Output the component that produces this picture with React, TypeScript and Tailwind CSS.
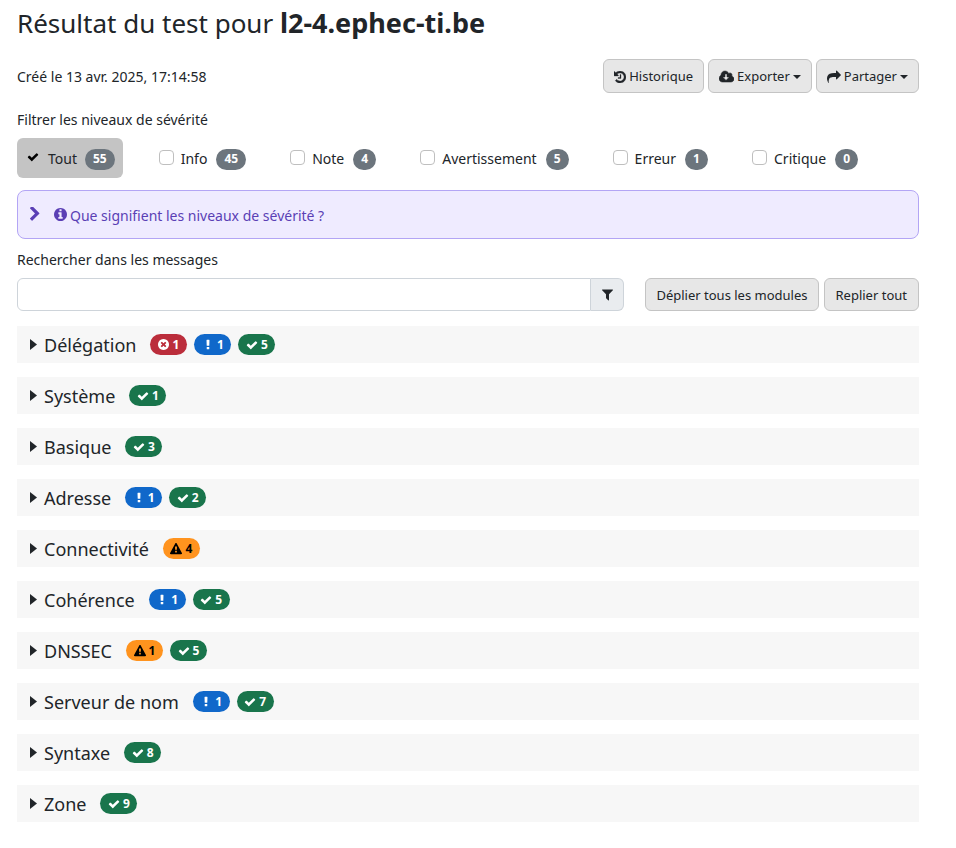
import { useState, type ReactNode } from "react";

const ICONS = {
  check: {
    box: "0 0 1792 1792",
    d: "M1671 566q0 40-28 68l-724 724-136 136q-28 28-68 28t-68-28l-136-136-362-362q-28-28-28-68t28-68l136-136q28-28 68-28t68 28l294 295 656-657q28-28 68-28t68 28l136 136q28 28 28 68z",
  },
  chevron: {
    box: "256 128 1280 1536",
    d: "M1363 877l-742 742q-19 19-45 19t-45-19l-166-166q-19-19-19-45t19-45l531-531-531-531q-19-19-19-45t19-45l166-166q19-19 45-19t45 19l742 742q19 19 19 45t-19 45z",
  },
  info: {
    box: "128 128 1536 1536",
    d: "M1152 1376v-160q0-14-9-23t-23-9h-96v-512q0-14-9-23t-23-9h-320q-14 0-23 9t-9 23v160q0 14 9 23t23 9h96v320h-96q-14 0-23 9t-9 23v160q0 14 9 23t23 9h448q14 0 23-9t9-23zm-128-896v-160q0-14-9-23t-23-9h-192q-14 0-23 9t-9 23v160q0 14 9 23t23 9h192q14 0 23-9t9-23zm640 416q0 209-103 385.5t-279.5 279.5-385.5 103-385.5-103-279.5-279.5-103-385.5 103-385.5 279.5-279.5 385.5-103 385.5 103 279.5 279.5 103 385.5z",
  },
  cross: {
    box: "128 128 1536 1536",
    d: "M1277 1122q0-26-19-45l-181-181 181-181q19-19 19-45 0-27-19-46l-90-90q-19-19-46-19-26 0-45 19l-181 181-181-181q-19-19-45-19-27 0-46 19l-90 90q-19 19-19 46 0 26 19 45l181 181-181 181q-19 19-19 45 0 27 19 46l90 90q19 19 46 19 26 0 45-19l181-181 181 181q19 19 45 19 27 0 46-19l90-90q19-19 19-46zm387-226q0 209-103 385.5t-279.5 279.5-385.5 103-385.5-103-279.5-279.5-103-385.5 103-385.5 279.5-279.5 385.5-103 385.5 103 279.5 279.5 103 385.5z",
  },
  history: {
    box: "128 128 1536 1536",
    d: "M1664 896q0 156-61 298t-164 245-245 164-298 61q-172 0-327-72.5t-264-204.5q-7-10-6.5-22.5t8.5-20.5l137-138q10-9 25-9 16 2 23 12 73 95 179 147t225 52q104 0 198.5-40.5t163.5-109.5 109.5-163.5 40.5-198.5-40.5-198.5-109.5-163.5-163.5-109.5-198.5-40.5q-98 0-188 35.5t-160 101.5l137 138q31 30 14 69-17 40-59 40h-448q-26 0-45-19t-19-45v-448q0-42 40-59 39-17 69 14l130 129q107-101 244.5-156.5t284.5-55.5q156 0 298 61t245 164 164 245 61 298zm-640-288v448q0 14-9 23t-23 9h-320q-14 0-23-9t-9-23v-64q0-14 9-23t23-9h224v-352q0-14 9-23t23-9h64q14 0 23 9t9 23z",
    stroke: 40,
  },
  download: {
    box: "-64 0 1920 1792",
    d: "M1216 928q0-14-9-23t-23-9h-224v-352q0-13-9.5-22.5t-22.5-9.5h-192q-13 0-22.5 9.5t-9.5 22.5v352h-224q-13 0-22.5 9.5t-9.5 22.5q0 14 9 23l352 352q9 9 23 9t23-9l351-351q10-12 10-24zm640 224q0 159-112.5 271.5t-271.5 112.5h-1088q-185 0-316.5-131.5t-131.5-316.5q0-130 70-240t188-165q-2-30-2-43 0-212 150-362t362-150q156 0 285.5 87t188.5 231q71-62 166-62 106 0 181 75t75 181q0 76-41 138 130 31 213.5 135.5t83.5 238.5z",
    stroke: 70,
  },
  share: {
    box: "0 0 1792 1792",
    d: "M1792 640q0 26-19 45l-512 512q-19 19-45 19t-45-19-19-45v-256h-224q-98 0-175.5 6t-154 21.5-133 42.5-105.5 69.5-80 101-48.5 138.5-17.5 181q0 55 5 123 0 6 2.5 23.5t2.5 26.5q0 15-8.5 25t-23.5 10q-16 0-28-17-7-9-13-22t-13.5-30-10.5-24q-127-285-127-451 0-199 53-333 162-403 875-403h224v-256q0-26 19-45t45-19 45 19l512 512q19 19 19 45z",
  },
  filter: {
    box: "192 192 1408 1536",
    d: "M1595 295q17 41-14 70l-493 493v742q0 42-40 59-13 5-25 5-27 0-45-19l-256-256q-19-19-19-45v-486l-493-493q-31-29-14-70 17-39 59-39h1280q42 0 59 39z",
  },
  warning: {
    box: "0 0 1792 1792",
    d: "M1024 1375v-190q0-14-9.5-23.5t-22.5-9.5h-192q-13 0-22.5 9.5t-9.5 23.5v190q0 14 9.5 23.5t22.5 9.5h192q13 0 22.5-9.5t9.5-23.5zm-2-374l18-459q0-12-10-19-13-11-24-11h-220q-11 0-24 11-10 7-10 21l17 457q0 10 10 16.5t24 6.5h185q14 0 23.5-6.5t10.5-16.5zm-14-934l768 1408q35 63-2 126-17 29-46.5 46t-63.5 17h-1536q-34 0-63.5-17t-46.5-46q-37-63-2-126l768-1408q17-31 47-49t65-18 65 18 47 49z",
  },
  exclamation: {
    box: "0 0 1792 1792",
    d: "M1088 1248v224q0 26-19 45t-45 19h-256q-26 0-45-19t-19-45v-224q0-26 19-45t45-19h256q26 0 45 19t19 45zm30-1056l-28 768q-1 26-20.5 45t-45.5 19h-256q-26 0-45.5-19t-20.5-45l-28-768q-1-26 17.5-45t44.5-19h320q26 0 44.5 19t17.5 45z",
  },
  caretRight: { box: "0 0 7 11", d: "M0 0L7 5.5L0 11z" },
  caretDown: { box: "0 0 8 4", d: "M0 0H8L4 4z" },
};

type IconName = keyof typeof ICONS;

function Icon({ name, className }: { name: IconName; className: string }) {
  const icon: { box: string; d: string; stroke?: number } = ICONS[name];
  return (
    <svg viewBox={icon.box} className={`shrink-0 ${className}`} fill="currentColor" aria-hidden="true">
      <path d={icon.d} stroke={icon.stroke ? "currentColor" : "none"} strokeWidth={icon.stroke} />
    </svg>
  );
}

function ActionButton({ children, className = "h-[34px] px-[10px]" }: { children: ReactNode; className?: string }) {
  return (
    <button
      type="button"
      className={`flex items-center justify-center gap-[3px] rounded-md border border-[#c4c4c4] bg-[#e7e7e7] pt-px text-[13px] whitespace-nowrap ${className}`}
    >
      {children}
    </button>
  );
}

function Count({ value }: { value: number }) {
  return (
    <span className="mt-px flex h-[21px] min-w-[23px] items-center justify-center rounded-full bg-[#6c757d] px-2 text-xs font-bold text-white">
      {value}
    </span>
  );
}

const LEVELS = [
  { label: "Info", count: 45 },
  { label: "Note", count: 4 },
  { label: "Avertissement", count: 5 },
  { label: "Erreur", count: 1 },
  { label: "Critique", count: 0 },
];

type Kind = "error" | "notice" | "ok" | "warning";

const KINDS: Record<Kind, { color: string; icon: IconName; size: string }> = {
  error: { color: "bg-[#bb2d3b] text-white", icon: "cross", size: "size-[11px]" },
  notice: { color: "bg-[#1068ca] text-white", icon: "exclamation", size: "size-3" },
  ok: { color: "bg-[#19754c] text-white", icon: "check", size: "size-3" },
  warning: { color: "bg-[#ff931e] text-black", icon: "warning", size: "size-3" },
};

const MODULES: { name: string; badges: [Kind, number][] }[] = [
  { name: "Délégation", badges: [["error", 1], ["notice", 1], ["ok", 5]] },
  { name: "Système", badges: [["ok", 1]] },
  { name: "Basique", badges: [["ok", 3]] },
  { name: "Adresse", badges: [["notice", 1], ["ok", 2]] },
  { name: "Connectivité", badges: [["warning", 4]] },
  { name: "Cohérence", badges: [["notice", 1], ["ok", 5]] },
  { name: "DNSSEC", badges: [["warning", 1], ["ok", 5]] },
  { name: "Serveur de nom", badges: [["notice", 1], ["ok", 7]] },
  { name: "Syntaxe", badges: [["ok", 8]] },
  { name: "Zone", badges: [["ok", 9]] },
];

export default function App() {
  const [selected, setSelected] = useState<string[]>([]);
  const toggle = (label: string) =>
    setSelected((now) => (now.includes(label) ? now.filter((l) => l !== label) : [...now, label]));

  return (
    <main className="min-h-screen bg-white pt-[6px] pr-[37px] pb-6 pl-[17px] font-['Noto_Sans',sans-serif] text-sm text-[#212529]">
      <h1 className="text-[26px] leading-[34px]">
        Résultat du test pour <strong className="text-[27px] font-bold">l2-4.ephec-ti.be</strong>
      </h1>

      <div className="mt-[19px] flex items-center justify-between">
        <p className="pt-px">Créé le 13 avr. 2025, 17:14:58</p>
        <div className="flex gap-1">
          <ActionButton>
            <Icon name="history" className="size-3" />
            Historique
          </ActionButton>
          <ActionButton>
            <Icon name="download" className="h-[14px] w-[15px]" />
            Exporter
            <Icon name="caretDown" className="h-1 w-2" />
          </ActionButton>
          <ActionButton>
            <Icon name="share" className="size-[14px]" />
            Partager
            <Icon name="caretDown" className="h-1 w-2" />
          </ActionButton>
        </div>
      </div>

      <fieldset className="mt-[17px]">
        <legend className="leading-5">Filtrer les niveaux de sévérité</legend>
        <div className="mt-2 flex h-10 items-center">
          <button
            type="button"
            aria-pressed={selected.length === 0}
            onClick={() => setSelected([])}
            className="mr-9 flex h-10 items-center gap-2 rounded-md bg-[#c4c4c4] pt-px pr-2 pl-[10px]"
          >
            <Icon name="check" className="mr-px mb-1 size-3 text-black" />
            Tout
            <Count value={55} />
          </button>
          <div className="flex gap-11 pt-px">
            {LEVELS.map((level) => (
              <label key={level.label} className="flex items-center gap-[9px]">
                <span className="flex items-center gap-[7px]">
                  <input
                    type="checkbox"
                    checked={selected.includes(level.label)}
                    onChange={() => toggle(level.label)}
                    className="mb-[3px] size-[15px] appearance-none rounded-[4px] border border-[#bfbfbf] bg-white checked:bg-[#5a3fb5]"
                  />
                  {level.label}
                </span>
                <Count value={level.count} />
              </label>
            ))}
          </div>
        </div>
      </fieldset>

      <button
        type="button"
        aria-expanded={false}
        className="mt-3 flex h-[49px] w-full items-center rounded-lg border border-[#b3a5f5] bg-[#efebff] pt-[2px] pl-[11px] text-[#5a3fb5]"
      >
        <Icon name="chevron" className="mr-[13px] mb-[3px] h-[14px] w-3" />
        <Icon name="info" className="mr-[3px] mb-[2px] size-[13px]" />
        Que signifient les niveaux de sévérité ?
      </button>

      <label htmlFor="search" className="mt-[11px] block leading-5">
        Rechercher dans les messages
      </label>
      <div className="mt-2 flex h-[33px]">
        <div className="mr-[21px] flex flex-1">
          <input
            id="search"
            type="text"
            className="min-w-0 flex-1 rounded-l-md border border-[#ced4da] bg-white px-2 outline-none"
          />
          <span className="flex w-[33px] items-center justify-center rounded-r-md border border-l-0 border-[#ced4da] bg-[#e9ecef]">
            <Icon name="filter" className="h-3 w-[11px]" />
          </span>
        </div>
        <div className="flex gap-[5px]">
          <ActionButton className="h-[33px] px-[10px]">Déplier tous les modules</ActionButton>
          <ActionButton className="h-[33px] px-[11px]">Replier tout</ActionButton>
        </div>
      </div>

      <div className="mt-[15px] flex flex-col gap-[14px]">
        {MODULES.map((module) => (
          <h2 key={module.name}>
            <button type="button" aria-expanded={false} className="flex h-[37px] w-full items-center bg-[#f7f7f7] pl-[13px]">
              <Icon name="caretRight" className="mr-[7px] h-[11px] w-[7px]" />
              <span className="mr-[14px] pt-px text-lg">{module.name}</span>
              <span className="flex gap-[7px]">
                {module.badges.map(([kind, value]) => (
                  <span
                    key={kind}
                    className={`flex h-[21px] w-[37px] items-center justify-center gap-[3px] rounded-full text-xs font-bold ${KINDS[kind].color}`}
                  >
                    <Icon name={KINDS[kind].icon} className={KINDS[kind].size} />
                    {value}
                  </span>
                ))}
              </span>
            </button>
          </h2>
        ))}
      </div>
    </main>
  );
}
